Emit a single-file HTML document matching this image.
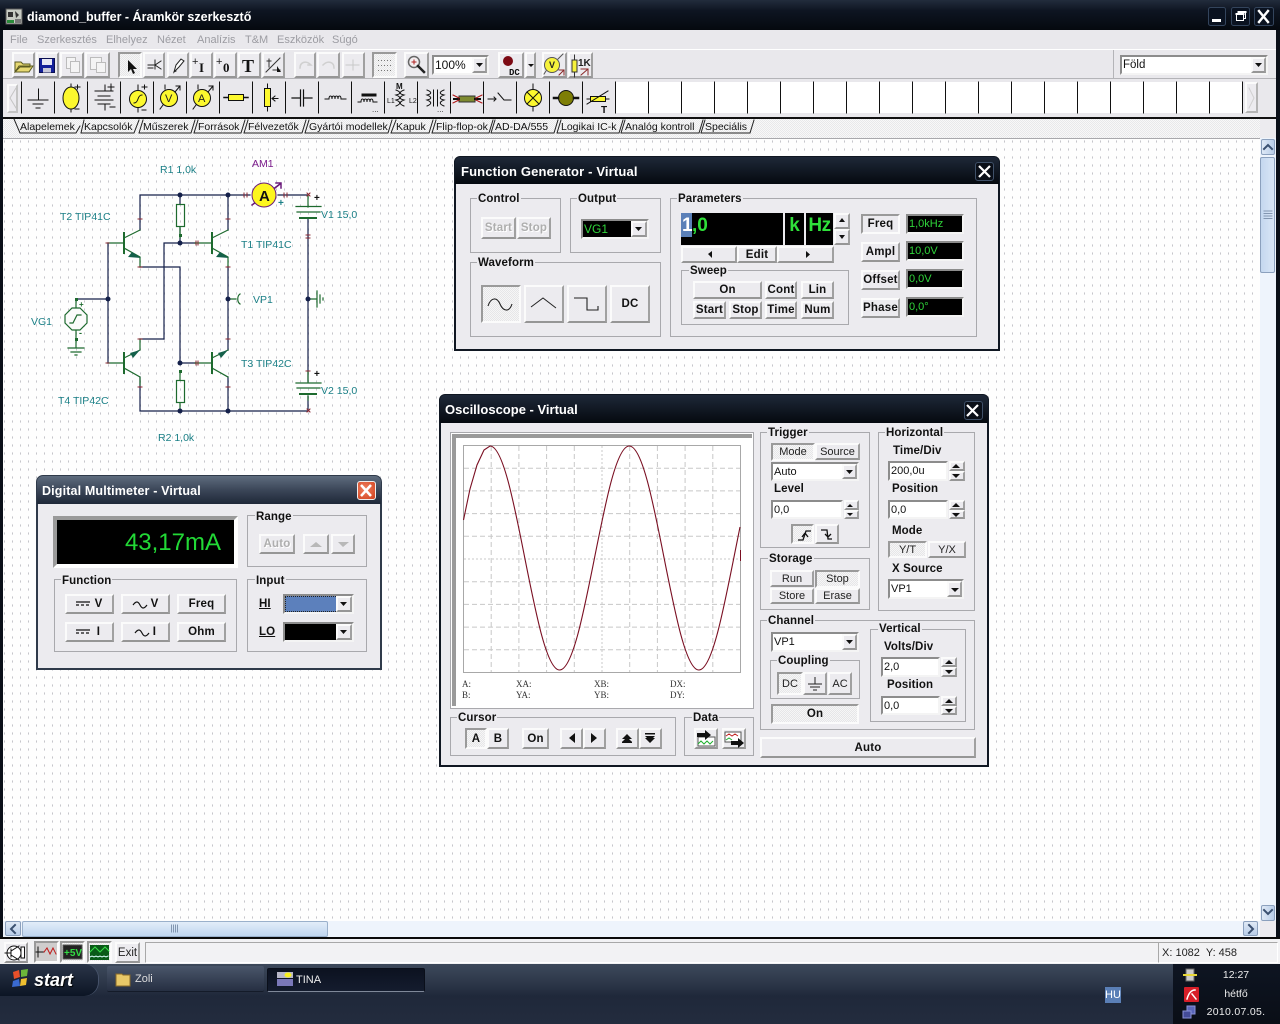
<!DOCTYPE html>
<html><head><meta charset="utf-8"><title>diamond_buffer</title>
<style>
html,body{margin:0;padding:0;width:1280px;height:1024px;overflow:hidden;background:#0a0f18}
body{font-family:"Liberation Sans",sans-serif;font-size:11px;color:#000;position:relative}
div,span.a{position:absolute;box-sizing:border-box;white-space:nowrap}
.b{background:#ecebef;border:2px solid;border-color:#fbfbfb #a0a0a0 #969696 #fbfbfb;display:flex;align-items:center;justify-content:center;font-weight:bold;font-size:11.5px;letter-spacing:.2px;color:#111}
.n{font-weight:normal;font-size:11px;color:#222;letter-spacing:0}
.d{color:#aeaeae;text-shadow:1px 1px 0 #fff}
.p{border-color:#9a9a9a #fbfbfb #fbfbfb #9a9a9a;background:repeating-conic-gradient(#f6f6f6 0 25%,#e6e6e8 0 50%) 0 0/2px 2px}
.g{border:1px solid #a9a9ad}
.t{font-weight:bold;font-size:11.5px;letter-spacing:.1px;color:#111;background:#ecebef;padding:0 1px;line-height:13px;height:13px}
.l{font-weight:bold;font-size:11.5px;letter-spacing:.1px;color:#111;line-height:13px;height:13px}
.w{background:#ecebef}
.ti{color:#fff;font-weight:bold;font-size:13px;letter-spacing:.15px;line-height:16px}
.i{background:#fff;border:2px solid;border-color:#8c8c8c #f4f4f4 #f4f4f4 #8c8c8c;font-size:11px;line-height:17px;padding-left:1px;color:#111}
.k{background:#000;border:2px solid;border-color:#8c8c8c #f4f4f4 #f4f4f4 #8c8c8c;color:#2fd43a;font-size:11px;line-height:16px;padding-left:1px}
.m{color:#9c9ca2;font-size:11px;line-height:13px;top:34px}
.tb{font-size:10.5px;line-height:13px;top:121px;color:#111}
.sc{fill:#1a7f86;font:10.5px "Liberation Sans",sans-serif}
</style></head><body>

<!-- main window -->
<div style="left:0;top:0;width:1280px;height:30px;background:linear-gradient(#222c3c 0,#0e1522 35%,#05090f 100%)"></div>
<div class="ti" style="left:27px;top:9px;letter-spacing:0;font-size:12.500px">diamond_buffer - Áramkör szerkesztő</div>
<div style="left:3px;top:30px;width:1273px;height:908px;background:#e9e8ec"></div>
<div class="m" style="left:10px">File</div>
<div class="m" style="left:37px">Szerkesztés</div>
<div class="m" style="left:106px">Elhelyez</div>
<div class="m" style="left:157px">Nézet</div>
<div class="m" style="left:197px">Analízis</div>
<div class="m" style="left:245px">T&amp;M</div>
<div class="m" style="left:277px">Eszközök</div>
<div class="m" style="left:332px">Súgó</div>
<div style="left:3px;top:49px;width:1273px;height:1px;background:#fff"></div>
<div style="left:3px;top:78px;width:1273px;height:1px;background:#b4b4b8"></div>
<div style="left:1113px;top:50px;width:1px;height:28px;background:#b4b4b8"></div>

<!-- toolbar 1 buttons -->
<div class="b" style="left:12px;top:52px;width:23px;height:26px"></div>
<div class="b" style="left:36px;top:52px;width:23px;height:26px"></div>
<div class="b" style="left:60px;top:52px;width:24px;height:26px"></div>
<div class="b" style="left:85px;top:52px;width:25px;height:26px"></div>
<div class="b p" style="left:118px;top:52px;width:24px;height:26px"></div>
<div class="b" style="left:143px;top:52px;width:22px;height:26px"></div>
<div class="b" style="left:167px;top:52px;width:22px;height:26px"></div>
<div class="b" style="left:190px;top:52px;width:23px;height:26px"></div>
<div class="b" style="left:214px;top:52px;width:23px;height:26px"></div>
<div class="b" style="left:238px;top:52px;width:23px;height:26px"></div>
<div class="b" style="left:262px;top:52px;width:23px;height:26px"></div>
<div class="b" style="left:294px;top:52px;width:22px;height:26px"></div>
<div class="b" style="left:317px;top:52px;width:23px;height:26px"></div>
<div class="b" style="left:342px;top:52px;width:23px;height:26px"></div>
<div class="b p" style="left:372px;top:52px;width:25px;height:26px"></div>
<div class="b" style="left:404px;top:52px;width:25px;height:26px"></div>
<div class="i" style="left:432px;top:55px;width:57px;height:20px;font-size:12px">100%</div>
<div class="b" style="left:472px;top:57px;width:15px;height:16px"></div>
<div class="b" style="left:498px;top:52px;width:26px;height:26px"></div>
<div class="b" style="left:525px;top:52px;width:11px;height:26px"></div>
<div class="b" style="left:542px;top:52px;width:25px;height:26px"></div>
<div class="b" style="left:568px;top:52px;width:25px;height:26px"></div>
<div class="i" style="left:1120px;top:55px;width:148px;height:20px;font-size:11.5px">Föld</div>
<div class="b" style="left:1251px;top:57px;width:15px;height:16px"></div>

<!-- component toolbar -->
<div style="left:615px;top:82px;width:628px;height:31px;background:#fff"></div>
<div class="b" style="left:7px;top:84px;width:11px;height:29px;border-color:#fbfbfb #c4c4c4 #c4c4c4 #fbfbfb"></div>
<div class="b" style="left:1245px;top:82px;width:13px;height:31px;border-color:#fbfbfb #b4b4b4 #b4b4b4 #fbfbfb"></div>
<div style="left:3px;top:117px;width:1273px;height:2px;background:#111"></div>
<div style="left:3px;top:119px;width:1257px;height:19px;background:repeating-conic-gradient(#f8f8f8 0 25%,#e8e8ea 0 50%) 0 0/2px 2px"></div>
<div style="left:1260px;top:119px;width:16px;height:19px;background:#ecebef"></div>

<!-- canvas -->
<svg style="position:absolute;left:3px;top:138px" width="1257" height="783">
<defs><pattern id="dots" x="1" y="2" width="8" height="8" patternUnits="userSpaceOnUse"><rect x="0" y="0" width="1" height="3" fill="#dcdce0"/><rect x="0" y="1" width="1" height="1" fill="#c6c6ca"/></pattern></defs>
<rect width="1257" height="783" fill="#fefefe"/><rect width="1257" height="783" fill="url(#dots)"/><rect width="1257" height="1" fill="#a8a8ac"/>
</svg>

<!-- right scrollbar -->
<div style="left:1260px;top:138px;width:16px;height:783px;background:#eef4fc"></div>
<div style="left:1261px;top:139px;width:14px;height:16px;background:linear-gradient(90deg,#dfe9f6,#b8cde8);border:1px solid #8ba0bd;border-radius:2px"></div>
<div style="left:1260px;top:157px;width:15px;height:116px;background:linear-gradient(90deg,#c4d7ef,#d9e6f6);border:1px solid #8ba0bd;border-radius:2px"></div>
<div style="left:1261px;top:905px;width:14px;height:16px;background:linear-gradient(90deg,#dfe9f6,#b8cde8);border:1px solid #8ba0bd;border-radius:2px"></div>
<!-- bottom scrollbar -->
<div style="left:3px;top:921px;width:1257px;height:16px;background:#eef4fc"></div>
<div style="left:5px;top:921px;width:16px;height:15px;background:linear-gradient(#dfe9f6,#b8cde8);border:1px solid #8ba0bd;border-radius:2px"></div>
<div style="left:22px;top:921px;width:306px;height:16px;background:linear-gradient(#e2edf9,#bfd5ef);border:1px solid #9ab0cb;border-radius:2px"></div>
<div style="left:1243px;top:921px;width:15px;height:15px;background:linear-gradient(#dfe9f6,#b8cde8);border:1px solid #8ba0bd;border-radius:2px"></div>
<div style="left:1260px;top:921px;width:16px;height:16px;background:#ecebef"></div>

<!-- status row -->
<div style="left:0;top:937px;width:1280px;height:2px;background:#0a0a0a"></div>
<div style="left:0;top:939px;width:1280px;height:25px;background:#f2f2f4"></div>
<div class="b" style="left:4px;top:942px;width:24px;height:21px"></div>
<div class="b p" style="left:34px;top:941px;width:25px;height:22px;background:#cfcdcd"></div>
<div class="b p" style="left:60px;top:941px;width:25px;height:22px"></div>
<div class="b p" style="left:87px;top:941px;width:25px;height:22px"></div>
<div class="b n" style="left:115px;top:942px;width:25px;height:21px;font-size:11.5px">Exit</div>
<div style="left:145px;top:942px;width:1014px;height:21px;border:1px solid;border-color:#a8a8a8 #fff #fff #a8a8a8"></div>
<div style="left:1158px;top:942px;width:120px;height:21px;border:1px solid;border-color:#a8a8a8 #fff #fff #a8a8a8;font-size:11px;line-height:20px;padding-left:3px;color:#222">X: 1082&nbsp; Y: 458</div>

<!-- taskbar -->
<div style="left:0;top:964px;width:1280px;height:60px;background:linear-gradient(#3d495b 0,#2a3446 22px,#1f283a 32px,#232c3e 100%)"></div>
<div style="left:0;top:964px;width:98px;height:32px;background:linear-gradient(#2a3548,#0c1524);border-radius:0 14px 14px 0;box-shadow:1px 0 0 #46526a"></div>
<div style="left:34px;top:970px;color:#fff;font-weight:bold;font-style:italic;font-size:18px;line-height:20px;text-shadow:1px 1px 1px #000">start</div>
<div style="left:107px;top:966px;width:157px;height:26px;background:linear-gradient(#4a566a,#262f42);border-radius:2px;border-bottom:1px solid #141b29"></div>
<div style="left:135px;top:972px;color:#ddd;font-size:11px;line-height:14px">Zoli</div>
<div style="left:267px;top:968px;width:158px;height:24px;background:linear-gradient(#0c1220,#141c2e);border:1px solid #0a0f1a;border-bottom:1px solid #7f8899;border-radius:2px"></div>
<div style="left:296px;top:973px;color:#eee;font-size:11px;line-height:14px">TINA</div>
<div style="left:1105px;top:987px;width:16px;height:16px;background:#5a7fb6;color:#fff;font-size:11px;line-height:16px;text-align:center">HU</div>
<div style="left:1173px;top:964px;width:107px;height:60px;background:linear-gradient(#0e1522,#0a0e16)"></div>
<div style="left:1200px;top:969px;width:72px;text-align:center;color:#eee;font-size:10.5px;line-height:13px">12:27</div>
<div style="left:1200px;top:988px;width:72px;text-align:center;color:#eee;font-size:10.5px;line-height:13px">hétfő</div>
<div style="left:1200px;top:1006px;width:72px;text-align:center;color:#eee;font-size:10.5px;line-height:13px;letter-spacing:.3px">2010.07.05.</div>

<!-- tab labels -->
<div class="tb" style="left:20px">Alapelemek</div>
<div class="tb" style="left:84px">Kapcsolók</div>
<div class="tb" style="left:143px">Műszerek</div>
<div class="tb" style="left:198px">Források</div>
<div class="tb" style="left:248px">Félvezetők</div>
<div class="tb" style="left:309px">Gyártói modellek</div>
<div class="tb" style="left:396px">Kapuk</div>
<div class="tb" style="left:436px">Flip-flop-ok</div>
<div class="tb" style="left:495px">AD-DA/555</div>
<div class="tb" style="left:561px">Logikai IC-k</div>
<div class="tb" style="left:625px">Analóg kontroll</div>
<div class="tb" style="left:705px">Speciális</div>

<!-- schematic + toolbar icons overlay -->
<svg style="position:absolute;left:0;top:0" width="1280" height="1024" stroke-linecap="square">
<!-- app icon & caption buttons -->
<rect x="6" y="9" width="16" height="15" fill="#c8ccc4" stroke="#555"/><path d="M8 12h5v5H8zM15 11l4 4-3 3z" fill="#333"/><rect x="7" y="20" width="7" height="3" fill="#2a8a3a"/><rect x="15" y="19" width="6" height="4" fill="#777"/>
<g fill="#0a1220" stroke="#33445c"><rect x="1208.500" y="7.500" width="17" height="18" rx="2"/><rect x="1231.500" y="7.500" width="18" height="18" rx="2"/><rect x="1254.500" y="7.500" width="19" height="18" rx="2"/></g>
<rect x="1212" y="19" width="9" height="3" fill="#fff"/>
<path d="M1238.500 11.500h7v7h-2M1236.500 13.500h7v7h-7z" fill="none" stroke="#fff"/><path d="M1236.500 14h7M1238.500 12h7" stroke="#fff" stroke-width="2"/>
<path d="M1259 11l9 11M1268 11l-9 11" stroke="#fff" stroke-width="2.400"/>

<!-- component toolbar separators -->
<g stroke="#111" stroke-width="1">
<path d="M21.500 82V113M54.500 82V113M87.500 82V113M120.500 82V113M153.500 82V113M186.500 82V113M219.500 82V113M252.500 82V113M285.500 82V113M318.500 82V113M351.500 82V113M384.500 82V113M417.500 82V113M450.500 82V113M483.500 82V113M516.500 82V113M549.500 82V113M582.500 82V113M615.500 82V113M648.500 82V113M681.500 82V113M714.500 82V113M747.500 82V113M780.500 82V113M813.500 82V113M846.500 82V113M879.500 82V113M912.500 82V113M945.500 82V113M978.500 82V113M1011.500 82V113M1044.500 82V113M1077.500 82V113M1110.500 82V113M1143.500 82V113M1176.500 82V113M1209.500 82V113M1242.500 82V113"/>
</g>
<path d="M16 88L10 98L16 108" fill="none" stroke="#c4c4c4"/>
<path d="M1249 88L1254 98L1249 108" fill="none" stroke="#d0d0d0"/>
<!-- tabs -->
<g fill="none" stroke="#222" stroke-width="1">
<path d="M14 119L20 133H76L80 126"/>
<path d="M81 133L84 120M81 133H134L139 120"/>
<path d="M139 133L143 120M139 133H191L195 120"/>
<path d="M194 133L198 120M194 133H241L245 120"/>
<path d="M244 133L248 120M244 133H302L306 120"/>
<path d="M305 133L309 120M305 133H388L392 120"/>
<path d="M391 133L396 120M391 133H429L433 120"/>
<path d="M432 133L436 120M432 133H489L493 120"/>
<path d="M491 133L495 120M491 133H554L558 120"/>
<path d="M557 133L561 120M557 133H619L623 120"/>
<path d="M621 133L625 120M621 133H699L703 120"/>
<path d="M701 133L705 120M701 133H750L754 120"/>
</g>
<!-- toolbar 1 icons -->
<path d="M15 62h6l2 2h7v3H20l-5 5zM15 72l4-6h14l-4 6z" fill="#e6d872" stroke="#5a5a20"/>
<rect x="39.500" y="58.500" width="15" height="14" fill="#14209a" stroke="#0a0f50"/><rect x="42" y="59" width="10" height="6" fill="#e8e8f4"/><rect x="43" y="68" width="8" height="4.500" fill="#c8c8d8"/>
<g fill="#f4f4f4" stroke="#bcbcbc"><rect x="66.500" y="57.500" width="9" height="11"/><rect x="70.500" y="61.500" width="9" height="11"/><rect x="90.500" y="57.500" width="11" height="12"/><rect x="96.500" y="62.500" width="9" height="10"/></g>
<path d="M128 60l0 12 3-3 2 5 2-1-2-4 4 0z" fill="#111"/>
<path d="M148 65h7M155 60v9M155 65l6-4M155 65l6 4M148 68h5" stroke="#222" fill="none"/>
<path d="M174 72l2-7 5-6 3 2-5 6zM174 72l2-1" fill="#fff" stroke="#222"/>
<text x="192" y="65" font-size="11" fill="#222">+</text><text x="199" y="72" font-size="13" font-weight="bold" font-family="Liberation Serif" fill="#111">I</text>
<text x="216" y="65" font-size="11" fill="#222">+</text><text x="223" y="72" font-size="13" font-weight="bold" font-family="Liberation Serif" fill="#111">0</text>
<text x="242" y="72" font-size="18" font-weight="bold" font-family="Liberation Serif" fill="#111">T</text>
<path d="M266 72L280 58M267 61h4M269 59v8M273 70h7" stroke="#333" fill="none"/><path d="M277 66v6h4z" fill="#111"/>
<path d="M300 68c0-6 6-8 11-3l-3 0M323 65c5-5 11-3 11 3" fill="none" stroke="#d0d0d0" stroke-width="1.500"/>
<path d="M346 65h13M353 60v10" stroke="#c8c8c8"/>
<g fill="#777"><rect x="378" y="60" width="1" height="1"/><rect x="381" y="60" width="1" height="1"/><rect x="384" y="60" width="1" height="1"/><rect x="387" y="60" width="1" height="1"/><rect x="390" y="60" width="1" height="1"/><rect x="378" y="65" width="1" height="1"/><rect x="381" y="65" width="1" height="1"/><rect x="384" y="65" width="1" height="1"/><rect x="387" y="65" width="1" height="1"/><rect x="390" y="65" width="1" height="1"/><rect x="378" y="70" width="1" height="1"/><rect x="381" y="70" width="1" height="1"/><rect x="384" y="70" width="1" height="1"/><rect x="387" y="70" width="1" height="1"/><rect x="390" y="70" width="1" height="1"/></g>
<circle cx="414" cy="62" r="5.500" fill="#f3eef0" stroke="#666" stroke-width="1.500"/><path d="M418 66l6 6" stroke="#222" stroke-width="2.500"/><path d="M412 62h4M414 60v4" stroke="#b02020"/>
<path d="M476 63h7l-3.500 4z" fill="#111"/>
<circle cx="508" cy="61" r="5" fill="#7c0a14"/><text x="509" y="75" font-size="9" font-weight="bold" font-family="Liberation Mono" fill="#111">DC</text>
<path d="M528 64h6l-3 3z" fill="#111"/>
<circle cx="552" cy="65" r="7.500" fill="#f6f23c" stroke="#555"/><path d="M544 74L546 71M558 59L563 54" stroke="#555"/><text x="549" y="68" font-size="9" font-weight="bold" fill="#222">V</text><path d="M559 75l5-5M559 70h5v5" stroke="#8a2a2a" fill="none"/>
<rect x="572" y="60" width="5" height="12" fill="#f6f23c" stroke="#333"/><path d="M574.500 55v5M574.500 72v5" stroke="#333"/><text x="578" y="66" font-size="10" fill="#222" font-weight="bold">1K</text><path d="M581 75l7-6M581 69h7v6" stroke="#8a2a2a" fill="none"/>
<path d="M1255 63h7l-3.500 4z" fill="#111"/>

<!-- component icons -->
<g stroke="#111" fill="none" stroke-width="1">
<path d="M38.500 89V100M28 100H48M33 104H43M36 108H40"/>
<ellipse cx="71" cy="98" rx="8" ry="11" fill="#fcf82e"/><path d="M71 84V87M71 109V112M75 87h5M77.500 85v4M75 109h4"/>
<path d="M105 85V91M95 91H113M98 96H110M95 100H113M98 104H110M105 104V110M108 87h6M111 84v6M110 107h5"/>
<circle cx="138" cy="99" r="8.500" fill="#fcf82e"/><path d="M138 85V90.500M138 107.500V112M134 103c2 0 3-1 4-4s2-4 4-4M142 87h5M144.500 85v4M142 110h4"/>
<circle cx="169" cy="98" r="8.500" fill="#fcf82e"/><path d="M160 109L163 105M175 92L180 86M176 86h4v4M165 85V89"/>
<circle cx="202" cy="98" r="8.500" fill="#fcf82e"/><path d="M193 109L196 105M208 92L213 86M209 86h4v4M198 85V89"/>
<rect x="228.500" y="94.500" width="15" height="6" fill="#fcf82e"/><path d="M224 97.500H228M244 97.500H248" stroke-width="1.500"/>
<rect x="264.500" y="88.500" width="6" height="18" fill="#fcf82e"/><path d="M267.500 84V88M267.500 107V111M272 98.500H278M272 98.500l3-2.500M272 98.500l3 2.500"/>
<path d="M292 98H300M300.500 90V106M303.500 90V106M304 98H312" stroke-width="1.200"/>
<path d="M325 99h4c0-4 3-4 3 0c0-4 3-4 3 0c0-4 3-4 3 0c0-4 3-4 3 0h5"/>
<path d="M358 102h3c0-4 3-4 3 0c0-4 3-4 3 0c0-4 3-4 3 0c0-4 3-4 3 0h4"/>
<path d="M363 95H375" stroke-width="3"/>
<path d="M396 90c5 2 5 4 0 5c5 2 5 4 0 5c5 2 5 4 0 6M404 90c-5 2-5 4 0 5c-5 2-5 4 0 5c-5 2-5 4 0 6"/>
<path d="M427 90c5 2 5 4 0 5c5 2 5 4 0 5c5 2 5 4 0 6M444 90c-5 2-5 4 0 5c-5 2-5 4 0 5c-5 2-5 4 0 6M433.500 90V106M437.500 90V106"/>
<path d="M488 99H496M494 97l2 2-2 2M498 93L504 100H511"/>
<circle cx="533" cy="98" r="8.500" fill="#fcf82e"/><path d="M527 92L539 104M539 92L527 104M533 84V89M533 107V111"/>
<circle cx="566" cy="98" r="7.500" fill="#7e7e06"/><path d="M554 98H558M574 98H578" stroke-width="2.500"/>
<rect x="590.500" y="96.500" width="15" height="5" fill="#fcf82e"/><path d="M587 99H590M606 99H609M587 104L608 91"/>
</g>
<text x="396" y="89" font-size="8" font-weight="bold" fill="#111">M</text><text x="387" y="103" font-size="7" fill="#111">L1</text><text x="409" y="103" font-size="7" fill="#111">L2</text>
<text x="372" y="112" font-size="8" fill="#333">...</text><text x="437" y="112" font-size="8" fill="#333">...</text>
<text x="165" y="102" font-size="11" fill="#222">V</text><text x="198" y="102" font-size="11" fill="#222">A</text>
<path d="M459 96h16v6h-16z" fill="#7e8a30" stroke="#333"/><path d="M454 99h5M475 99h5" stroke="#111" stroke-width="2"/><path d="M453 95l6 3M453 103l6-3M482 95l-6 3M482 103l-6-3" stroke="#b01010"/>
<text x="601" y="113" font-size="10" font-weight="bold" fill="#111">T</text>

<!-- schematic wires navy -->
<g fill="none" stroke="#14204a" stroke-width="1.200">
<path d="M140 230V195H250M278 195H308M308 218V381M308 396V411H140V377"/>
<path d="M228 230V195M228 266V350M228 377V411"/>
<path d="M180 195V204M180 227V243M164 339V243H195"/>
<path d="M140 339H164M108 243V363"/>
<path d="M140 267H180V363H195"/>
<path d="M76 299H108"/>
</g>
<!-- green component parts -->
<g fill="none" stroke="#1d6a2e" stroke-width="1.200">
<rect x="176.500" y="204.500" width="8" height="22"/>
<rect x="176.500" y="380.500" width="8" height="22"/>
<path d="M180 372V380M180 403V411"/>
<path d="M180 227V238"/>
<path d="M212 233V253M124 233V253M212 353V373M124 353V373" stroke-width="2"/>
<path d="M195 243H212M212 238L228 230M212 248L228 257V266M212 358L228 350M212 368L228 377"/>
<path d="M108 243H124M124 238L140 230M124 248L140 257V267M124 358L140 350V339M108 363H124M124 368L140 377V385"/>
<path d="M195 363H212"/>
<path d="M76 299V308M76 330V348M68 348H84M71 352H81M75 355H77"/>
<polygon points="72,308 80,308 87,315 87,323 80,330 72,330 65,323 65,315" fill="#fbfbfb"/>
<path d="M70 323h3l4-8h4"/>
<path d="M228 299H236M240 294c-3 2-3 8 0 10M308 299H317M317 291V307M320 295V303M323 298V300"/>
<path d="M308 195V207M296 206.500H321M297 212H320"/>
<path d="M300 218H316" stroke-width="2"/>
<path d="M296 383H321M297 388H320M308 372V383M308 396V400"/>
<path d="M300 394H316" stroke-width="2"/>
</g>
<g fill="#14604a"><polygon points="229,258 220,252 216,257"/><polygon points="141,258 132,252 128,257"/><polygon points="228,350 218,353 221,358"/><polygon points="140,350 130,353 133,358"/></g>
<g fill="#14204a"><circle cx="180" cy="195" r="2.500"/><circle cx="228" cy="195" r="2.500"/><circle cx="180" cy="243" r="2.500"/><circle cx="108" cy="299" r="2.500"/><circle cx="228" cy="299" r="2.500"/><circle cx="308" cy="299" r="2.500"/><circle cx="180" cy="363" r="2.500"/><circle cx="180" cy="411" r="2.500"/><circle cx="228" cy="411" r="2.500"/></g>
<g fill="#1d6a2e"><rect x="179" y="234" width="3" height="3"/><rect x="179" y="370" width="3" height="3"/><rect x="75" y="298" width="3" height="3"/><rect x="75" y="338" width="3" height="3"/></g>
<g stroke="#8a2530" stroke-width="1"><path d="M138 219h4M138 267h4M226 219h4M226 267h4M226 339h4M226 387h4M138 387h4M138 339h4M306 235h4M306 238h4M306 371h4"/><path d="M106 243h3M106 363h3M196 241v4M198 241v4M196 361v4M198 361v4M244 193v4M247 193v4M284 193v4M287 193v4M307 193l3 3M310 193l-3 3M307 409l3 3M310 409l-3 3"/></g>
<path d="M252 205L280 184" stroke="#6a1a7a" stroke-width="1.500"/>
<circle cx="264" cy="195" r="12" fill="#fdf61e" stroke="#6a1a7a" stroke-width="1"/>
<path d="M276 183h5v5M275 188L280 184" stroke="#6a1a7a" stroke-width="1.500" fill="none"/>
<text x="259" y="201" font-size="15" font-weight="bold" fill="#111">A</text>
<text x="278" y="206" font-size="10" fill="#1a7f86" font-weight="bold">+</text>
<text x="314" y="201" font-size="10" font-weight="bold" fill="#111">+</text><text x="314" y="377" font-size="10" font-weight="bold" fill="#111">+</text>
<text x="79" y="307" font-size="8" font-weight="bold" fill="#1d6a2e">+</text><text x="79" y="336" font-size="9" font-weight="bold" fill="#1d6a2e">-</text>
<g class="sc">
<text class="sc" x="160" y="173">R1 1,0k</text><text class="sc" x="60" y="220">T2 TIP41C</text><text class="sc" x="241" y="248">T1 TIP41C</text>
<text class="sc" x="253" y="303">VP1</text><text class="sc" x="31" y="325">VG1</text><text class="sc" x="241" y="367">T3 TIP42C</text>
<text class="sc" x="58" y="404">T4 TIP42C</text><text class="sc" x="158" y="441">R2 1,0k</text><text class="sc" x="321" y="218">V1 15,0</text><text class="sc" x="321" y="394">V2 15,0</text>
</g>
<text x="252" y="167" font-size="10.500" fill="#7a1a8a">AM1</text>
<!-- scrollbar glyphs -->
<path d="M1264 149l4-4 4 4" fill="none" stroke="#3a5070" stroke-width="2"/>
<path d="M1264 910l4 4 4-4" fill="none" stroke="#3a5070" stroke-width="2"/>
<path d="M1264 211h8M1264 213.500h8M1264 216h8M1264 218.500h8" stroke="#8296b0"/>
<path d="M15 925l-4 4 4 4" fill="none" stroke="#3a5070" stroke-width="2"/>
<path d="M1249 925l4 4-4 4" fill="none" stroke="#3a5070" stroke-width="2"/>
<path d="M171.500 925v7M173.500 925v7M175.500 925v7M177.500 925v7" stroke="#8296b0"/>
<!-- status row icons -->
<circle cx="14" cy="953" r="7" fill="#fff" stroke="#111"/><path d="M5 953H11M11 949V957M11 951L19 946M11 955L19 960" stroke="#111"/><rect x="21" y="947" width="3.500" height="11" fill="#fff" stroke="#111"/>
<path d="M36 952H44" stroke="#111"/><path d="M38 947v10" stroke="#111"/><path d="M44 952l3-4 3 6 3-6 3 6" fill="none" stroke="#c01818"/>
<rect x="63" y="945" width="19" height="14" fill="#222" stroke="#555"/><text x="64" y="956" font-size="10" font-weight="bold" fill="#33dd44">+5V</text>
<rect x="90" y="945" width="19" height="15" fill="#0a5a18"/><path d="M90 952l5-5 5 5 5-5 4 4" fill="none" stroke="#38e048"/><path d="M90 957l2-1 2 1 2-1 2 1 2-1 2 1 2-1 2 1 2-1" fill="none" stroke="#dff"/>
<!-- start logo -->
<path d="M13 972l6-2 1 7-6 2z" fill="#e8502a"/><path d="M21 970l7-1-1 7-6 1z" fill="#6cb83a"/><path d="M13 981l6-2 1 7-8 1z" fill="#3a6ad0"/><path d="M21 979l6-1-1 7-6 1z" fill="#f0c030"/>
<path d="M116 974h6l1 1h7v11h-14z" fill="#e8c868" stroke="#8a6a28"/>
<rect x="277" y="972" width="16" height="6" fill="#b8b8c8"/><rect x="277" y="979" width="16" height="7" fill="#7a78b8"/><ellipse cx="288" cy="975" rx="3.500" ry="2.500" fill="#f8f020"/>
<rect x="1186" y="969" width="8" height="12" fill="#ccc" stroke="#666"/><path d="M1184 975h12" stroke="#e8d838" stroke-width="2"/>
<rect x="1184" y="987" width="15" height="15" fill="#d81e28" rx="1"/><path d="M1187 999c2-7 5-9 8-9M1192 994l4 5" stroke="#fff" stroke-width="1.500" fill="none"/>
<rect x="1187" y="1006" width="8" height="8" fill="#5a66b8" stroke="#8a92d8"/><rect x="1183" y="1011" width="8" height="7" fill="#444c98" stroke="#8a92d8"/>
</svg>

<!-- Multimeter -->
<div class="w" style="left:36px;top:475px;width:346px;height:195px;border:2px solid #2f3a4a;border-radius:7px 7px 0 0"></div>
<div style="left:37px;top:476px;width:344px;height:28px;background:linear-gradient(#5e6c7e,#3b4658 50%,#1e2838);border-radius:6px 6px 0 0"></div>
<div class="ti" style="left:42px;top:483px;font-size:12.5px">Digital Multimeter - Virtual</div>
<div style="left:357px;top:481px;width:19px;height:19px;background:radial-gradient(circle at 40% 40%,#f08060,#d0401c);border:1px solid #eee;border-radius:3px;color:#fff"></div>
<div style="left:53px;top:516px;width:185px;height:52px;background:#000;border:4px solid;border-color:#9a9a9a #fff #fff #9a9a9a"></div>
<div style="left:57px;top:528px;width:164px;text-align:right;color:#22d936;font-size:24px;line-height:30px">43,17mA</div>
<div class="g" style="left:247px;top:515px;width:120px;height:52px"></div><div class="t" style="left:255px;top:511px">Range</div>
<div class="b d" style="left:259px;top:534px;width:36px;height:20px">Auto</div>
<div class="b" style="left:303px;top:534px;width:26px;height:20px"></div>
<div class="b" style="left:331px;top:534px;width:24px;height:20px"></div>
<div class="g" style="left:54px;top:579px;width:183px;height:73px"></div><div class="t" style="left:61px;top:575px">Function</div>
<div class="b" style="left:65px;top:594px;width:49px;height:20px;padding-left:18px">V</div>
<div class="b" style="left:121px;top:594px;width:49px;height:20px;padding-left:18px">V</div>
<div class="b" style="left:177px;top:594px;width:49px;height:20px">Freq</div>
<div class="b" style="left:65px;top:622px;width:49px;height:20px;padding-left:18px">I</div>
<div class="b" style="left:121px;top:622px;width:49px;height:20px;padding-left:18px">I</div>
<div class="b" style="left:177px;top:622px;width:49px;height:20px">Ohm</div>
<div class="g" style="left:247px;top:579px;width:120px;height:73px"></div><div class="t" style="left:255px;top:575px">Input</div>
<div class="l" style="left:259px;top:598px;text-decoration:underline">HI</div>
<div class="l" style="left:259px;top:626px;text-decoration:underline">LO</div>
<div style="left:283px;top:594px;width:71px;height:20px;background:#5c80bc;border:2px solid;border-color:#8c8c8c #f4f4f4 #f4f4f4 #8c8c8c;outline:1px dotted #222;outline-offset:-3px"></div>
<div class="b" style="left:336px;top:596px;width:16px;height:16px"></div>
<div style="left:283px;top:622px;width:71px;height:20px;background:#000;border:2px solid;border-color:#8c8c8c #f4f4f4 #f4f4f4 #8c8c8c"></div>
<div class="b" style="left:336px;top:624px;width:16px;height:16px"></div>
<svg style="position:absolute;left:0;top:0" width="1280" height="1024">
<path d="M76 602H90M76 605h3M81 605h3M86 605h3" stroke="#111" stroke-width="1.200"/>
<path d="M76 630H90M76 633h3M81 633h3M86 633h3" stroke="#111" stroke-width="1.200"/>
<path d="M133 605c3-4 5-4 7 0s4 4 7 0" stroke="#111" stroke-width="1.200" fill="none"/>
<path d="M135 633c3-4 5-4 7 0s4 4 7 0" stroke="#111" stroke-width="1.200" fill="none"/>
<path d="M310 547l6-5 6 5z M338 542l5 5 6-5z" fill="#b8b8b8"/>
<path d="M340 602h7l-3.500 4zM340 630h7l-3.500 4z" fill="#111"/>
<path d="M361 485l10 11M371 485l-10 11" stroke="#fff" stroke-width="2.500"/>
</svg>

<!-- Function generator -->
<div class="w" style="left:454px;top:156px;width:546px;height:195px;border:2px solid #101722;border-radius:6px 6px 0 0"></div>
<div style="left:455px;top:157px;width:544px;height:27px;background:linear-gradient(#1e2838,#05090f);border-radius:5px 5px 0 0"></div>
<div class="ti" style="left:461px;top:164px">Function Generator - Virtual</div>
<div style="left:975px;top:162px;width:19px;height:19px;border:1px solid #3f5068;border-radius:3px;background:#0a0f18"></div>
<div class="g" style="left:470px;top:198px;width:91px;height:55px"></div><div class="t" style="left:477px;top:193px">Control</div>
<div class="g" style="left:570px;top:198px;width:91px;height:55px"></div><div class="t" style="left:577px;top:193px">Output</div>
<div class="g" style="left:470px;top:262px;width:191px;height:75px"></div><div class="t" style="left:477px;top:257px">Waveform</div>
<div class="g" style="left:670px;top:198px;width:307px;height:139px"></div><div class="t" style="left:677px;top:193px">Parameters</div>
<div class="b d" style="left:481px;top:217px;width:35px;height:22px">Start</div>
<div class="b d" style="left:517px;top:217px;width:34px;height:22px">Stop</div>
<div class="k" style="left:581px;top:219px;width:68px;height:20px;font-size:12px">VG1</div>
<div class="b" style="left:631px;top:221px;width:16px;height:16px"></div>
<div class="b p" style="left:481px;top:285px;width:40px;height:38px"></div>
<div class="b" style="left:524px;top:285px;width:40px;height:38px"></div>
<div class="b" style="left:567px;top:285px;width:40px;height:38px"></div>
<div class="b" style="left:610px;top:285px;width:40px;height:38px">DC</div>
<div style="left:681px;top:213px;width:102px;height:32px;background:#000"></div>
<div style="left:681px;top:213px;width:11px;height:24px;background:#5b80b8"></div>
<div style="left:682px;top:213px;color:#fff;font-weight:bold;font-size:19px;line-height:26px">1</div>
<div style="left:692px;top:213px;color:#2fe03a;font-weight:bold;font-size:19px;line-height:26px">,0</div>
<div style="left:785px;top:213px;width:19px;height:32px;background:#000;color:#2fe03a;font-weight:bold;font-size:19px;line-height:26px;text-align:center">k</div>
<div style="left:806px;top:213px;width:27px;height:32px;background:#000;color:#2fe03a;font-weight:bold;font-size:19px;line-height:26px;text-align:center;letter-spacing:-.5px">Hz</div>
<div class="b" style="left:834px;top:213px;width:16px;height:16px"></div>
<div class="b" style="left:834px;top:229px;width:16px;height:16px"></div>
<div class="b" style="left:681px;top:246px;width:56px;height:17px"></div>
<div class="b" style="left:737px;top:246px;width:40px;height:17px">Edit</div>
<div class="b" style="left:777px;top:246px;width:57px;height:17px"></div>
<div class="g" style="left:681px;top:270px;width:168px;height:55px"></div><div class="t" style="left:689px;top:265px">Sweep</div>
<div class="b" style="left:693px;top:281px;width:69px;height:18px">On</div>
<div class="b" style="left:765px;top:281px;width:32px;height:18px">Cont</div>
<div class="b" style="left:801px;top:281px;width:33px;height:18px">Lin</div>
<div class="b" style="left:693px;top:301px;width:33px;height:18px">Start</div>
<div class="b" style="left:729px;top:301px;width:33px;height:18px">Stop</div>
<div class="b" style="left:765px;top:301px;width:32px;height:18px">Time</div>
<div class="b" style="left:801px;top:301px;width:33px;height:18px">Num</div>
<div class="b" style="left:861px;top:214px;width:39px;height:20px;border-color:#9a9a9a #fbfbfb #fbfbfb #9a9a9a">Freq</div>
<div class="k" style="left:906px;top:214px;width:58px;height:20px">1,0kHz</div>
<div class="b" style="left:861px;top:242px;width:39px;height:20px">Ampl</div>
<div class="k" style="left:906px;top:241px;width:58px;height:20px">10,0V</div>
<div class="b" style="left:861px;top:270px;width:39px;height:20px">Offset</div>
<div class="k" style="left:906px;top:269px;width:58px;height:20px">0,0V</div>
<div class="b" style="left:861px;top:298px;width:39px;height:20px">Phase</div>
<div class="k" style="left:906px;top:297px;width:58px;height:20px">0,0°</div>
<svg style="position:absolute;left:0;top:0" width="1280" height="1024">
<path d="M979 166l11 11M990 166l-11 11" stroke="#fff" stroke-width="2.200"/>
<path d="M635 227h7l-3.500 4z" fill="#111"/>
<path d="M488 306c3-9 9-9 12-2s9 9 12 0" fill="none" stroke="#222" stroke-width="1.100"/>
<path d="M531 307l12-9 13 10" fill="none" stroke="#222" stroke-width="1"/>
<path d="M574 298h13v12h11v-4" fill="none" stroke="#222" stroke-width="1.100"/>
<path d="M839 222l3-4 3 4zM839 235l3 4 3-4z" fill="#111"/>
<path d="M708 254l4-3v7zM806 251l0 7 4-3.500z" fill="#111"/>
</svg>

<!-- Oscilloscope -->
<div class="w" style="left:439px;top:394px;width:550px;height:373px;border:2px solid #101722;border-radius:6px 6px 0 0"></div>
<div style="left:440px;top:395px;width:548px;height:28px;background:linear-gradient(#1e2838,#05090f);border-radius:5px 5px 0 0"></div>
<div class="ti" style="left:445px;top:402px;letter-spacing:0">Oscilloscope - Virtual</div>
<div style="left:964px;top:401px;width:19px;height:19px;border:1px solid #3f5068;border-radius:3px;background:#0a0f18"></div>
<div style="left:450px;top:432px;width:304px;height:277px;background:#fff;border:1px solid #a9a9ad"></div>
<div style="left:452px;top:434px;width:300px;height:4px;background:#9a9a9a"></div>
<div style="left:452px;top:434px;width:4px;height:272px;background:#9a9a9a"></div>
<svg style="position:absolute;left:0;top:0" width="1280" height="1024">
<rect x="463.500" y="445.500" width="277" height="227" fill="#fff" stroke="#a8a8a8"/>
<g stroke="#c8c8c8" stroke-dasharray="5 3" fill="none">
<path d="M491.200 446V672M518.900 446V672M546.600 446V672M574.300 446V672M629.700 446V672M657.400 446V672M685.100 446V672M712.800 446V672"/>
<path d="M464 468.200H740M464 490.900H740M464 513.600H740M464 536.300H740M464 581.700H740M464 604.400H740M464 627.100H740M464 649.800H740"/>
</g>
<g stroke="#c8c8c8" stroke-dasharray="2 2" fill="none"><path d="M602 446V672M464 559H740"/></g>
<path d="M463.500 520L470 489L477 465L484 450L490 446C502.600 446 513.500 500.600 524.800 558C536.200 615.400 547 670 559.600 670C572.200 670 583.100 615.400 594.500 558C605.900 500.600 616.700 446 629.300 446C641.900 446 652.800 500.600 664.100 558C675.500 615.400 686.300 670 698.900 670C711.500 670 722.400 615.400 733.800 558L737 542L740 527" fill="none" stroke="#7a0f22" stroke-width="1.100"/>
<path d="M740.500 550V561" stroke="#7a0f22"/>
<g font-family="Liberation Serif" font-size="9" fill="#333">
<text x="462" y="687">A:</text><text x="462" y="698">B:</text><text x="516" y="687">XA:</text><text x="516" y="698">YA:</text><text x="594" y="687">XB:</text><text x="594" y="698">YB:</text><text x="670" y="687">DX:</text><text x="670" y="698">DY:</text>
</g>
</svg>
<div class="g" style="left:450px;top:717px;width:226px;height:39px"></div><div class="t" style="left:457px;top:712px">Cursor</div>
<div class="g" style="left:684px;top:717px;width:70px;height:39px"></div><div class="t" style="left:692px;top:712px">Data</div>
<div class="b p" style="left:465px;top:728px;width:22px;height:21px">A</div>
<div class="b" style="left:487px;top:728px;width:22px;height:21px">B</div>
<div class="b" style="left:522px;top:728px;width:27px;height:21px">On</div>
<div class="b" style="left:560px;top:728px;width:23px;height:21px"></div>
<div class="b" style="left:583px;top:728px;width:23px;height:21px"></div>
<div class="b" style="left:616px;top:728px;width:23px;height:21px"></div>
<div class="b" style="left:639px;top:728px;width:23px;height:21px"></div>
<div class="b" style="left:694px;top:728px;width:24px;height:21px"></div>
<div class="b" style="left:722px;top:728px;width:24px;height:21px"></div>

<div class="g" style="left:760px;top:432px;width:110px;height:116px"></div><div class="t" style="left:767px;top:427px">Trigger</div>
<div class="b n p" style="left:771px;top:443px;width:44px;height:18px">Mode</div>
<div class="b n" style="left:815px;top:443px;width:45px;height:17px">Source</div>
<div class="i" style="left:771px;top:462px;width:88px;height:19px">Auto</div>
<div class="b" style="left:842px;top:464px;width:15px;height:15px"></div>
<div class="l" style="left:774px;top:483px">Level</div>
<div class="i" style="left:771px;top:500px;width:72px;height:19px">0,0</div>
<div class="b" style="left:844px;top:500px;width:15px;height:10px"></div>
<div class="b" style="left:844px;top:510px;width:15px;height:9px"></div>
<div class="b p" style="left:791px;top:524px;width:23px;height:20px"></div>
<div class="b" style="left:815px;top:524px;width:24px;height:20px"></div>
<div class="g" style="left:760px;top:558px;width:110px;height:52px"></div><div class="t" style="left:768px;top:553px">Storage</div>
<div class="b n" style="left:770px;top:570px;width:44px;height:17px">Run</div>
<div class="b n p" style="left:815px;top:570px;width:45px;height:18px">Stop</div>
<div class="b n" style="left:770px;top:588px;width:44px;height:16px">Store</div>
<div class="b n" style="left:815px;top:588px;width:45px;height:16px">Erase</div>

<div class="g" style="left:878px;top:432px;width:97px;height:179px"></div><div class="t" style="left:885px;top:427px">Horizontal</div>
<div class="l" style="left:893px;top:445px">Time/Div</div>
<div class="i" style="left:888px;top:461px;width:60px;height:20px">200,0u</div>
<div class="b" style="left:949px;top:461px;width:16px;height:10px"></div>
<div class="b" style="left:949px;top:471px;width:16px;height:10px"></div>
<div class="l" style="left:892px;top:483px">Position</div>
<div class="i" style="left:888px;top:500px;width:60px;height:19px">0,0</div>
<div class="b" style="left:949px;top:500px;width:16px;height:10px"></div>
<div class="b" style="left:949px;top:510px;width:16px;height:9px"></div>
<div class="l" style="left:892px;top:525px">Mode</div>
<div class="b n p" style="left:888px;top:541px;width:39px;height:17px">Y/T</div>
<div class="b n" style="left:928px;top:541px;width:38px;height:17px">Y/X</div>
<div class="l" style="left:892px;top:563px">X Source</div>
<div class="i" style="left:888px;top:579px;width:76px;height:20px">VP1</div>
<div class="b" style="left:947px;top:581px;width:15px;height:16px"></div>

<div class="g" style="left:760px;top:620px;width:215px;height:110px"></div><div class="t" style="left:767px;top:615px">Channel</div>
<div class="i" style="left:771px;top:632px;width:88px;height:20px">VP1</div>
<div class="b" style="left:842px;top:634px;width:15px;height:16px"></div>
<div class="g" style="left:770px;top:660px;width:90px;height:39px"></div><div class="t" style="left:777px;top:655px">Coupling</div>
<div class="b n p" style="left:777px;top:672px;width:26px;height:23px">DC</div>
<div class="b" style="left:803px;top:672px;width:24px;height:23px"></div>
<div class="b n" style="left:828px;top:672px;width:24px;height:23px">AC</div>
<div class="b p" style="left:771px;top:704px;width:88px;height:20px">On</div>
<div class="g" style="left:870px;top:629px;width:96px;height:93px"></div><div class="t" style="left:878px;top:623px">Vertical</div>
<div class="l" style="left:884px;top:641px">Volts/Div</div>
<div class="i" style="left:881px;top:657px;width:59px;height:20px">2,0</div>
<div class="b" style="left:941px;top:657px;width:16px;height:10px"></div>
<div class="b" style="left:941px;top:667px;width:16px;height:10px"></div>
<div class="l" style="left:887px;top:679px">Position</div>
<div class="i" style="left:881px;top:696px;width:59px;height:19px">0,0</div>
<div class="b" style="left:941px;top:696px;width:16px;height:10px"></div>
<div class="b" style="left:941px;top:706px;width:16px;height:9px"></div>
<div class="b" style="left:760px;top:737px;width:216px;height:21px">Auto</div>
<svg style="position:absolute;left:0;top:0" width="1280" height="1024">
<path d="M967 405l11 11M978 405l-11 11" stroke="#fff" stroke-width="2.200"/>
<g fill="#111">
<path d="M846 470h7l-3.500 4zM847 507l3-3 3 3zM847 513l3 3 3-3z"/>
<path d="M952 468l4-4 4 4zM952 474l4 4 4-4zM952 507l4-4 4 4zM952 513l4 4 4-4zM951 588h8l-4 4z"/>
<path d="M846 640h7l-3.500 4z"/>
<path d="M945 664l4-4 4 4zM945 670l4 4 4-4zM945 703l4-4 4 4zM945 709l4 4 4-4z"/>
<path d="M575 733v10l-6-5zM591 733v10l6-5zM622 739l5-5 5 5zM622 743h10v-1.500h-10zM645 738l5 5 5-5zM645 733h10v1.500h-10z"/>
</g>
<path d="M622 742l5-5 5 5z" fill="#111"/><path d="M645 736l5 5 5-5z" fill="#111"/>
<path d="M798 540h5l3-9h5M805 533l-3 4M805 533l3 4" fill="none" stroke="#111" stroke-width="1.300"/>
<path d="M821 530h6l1 9h4M828 537l-3-3M828 537l3-3" fill="none" stroke="#111" stroke-width="1.300"/>
<path d="M815 677V684M808 684H822M810 687H820M813 690H817" stroke="#222" fill="none"/>
<rect x="698" y="737" width="17" height="9" fill="#fff" stroke="#555"/><path d="M698 744l3-3 3 3 3-3 3 3 3-3" stroke="#20b030" fill="none"/><path d="M697 733h8v-3l6 5-6 5v-3h-8z" fill="#111"/>
<rect x="725" y="732" width="16" height="10" fill="#fff" stroke="#555"/><path d="M726 736l3-2 3 2 3-2 3 2" stroke="#c02020" fill="none"/><path d="M726 740l3-2 3 2" stroke="#20b030" fill="none"/><path d="M731 741h7v-3l6 5-6 5v-3h-7z" fill="#111"/>
</svg>
</body></html>
